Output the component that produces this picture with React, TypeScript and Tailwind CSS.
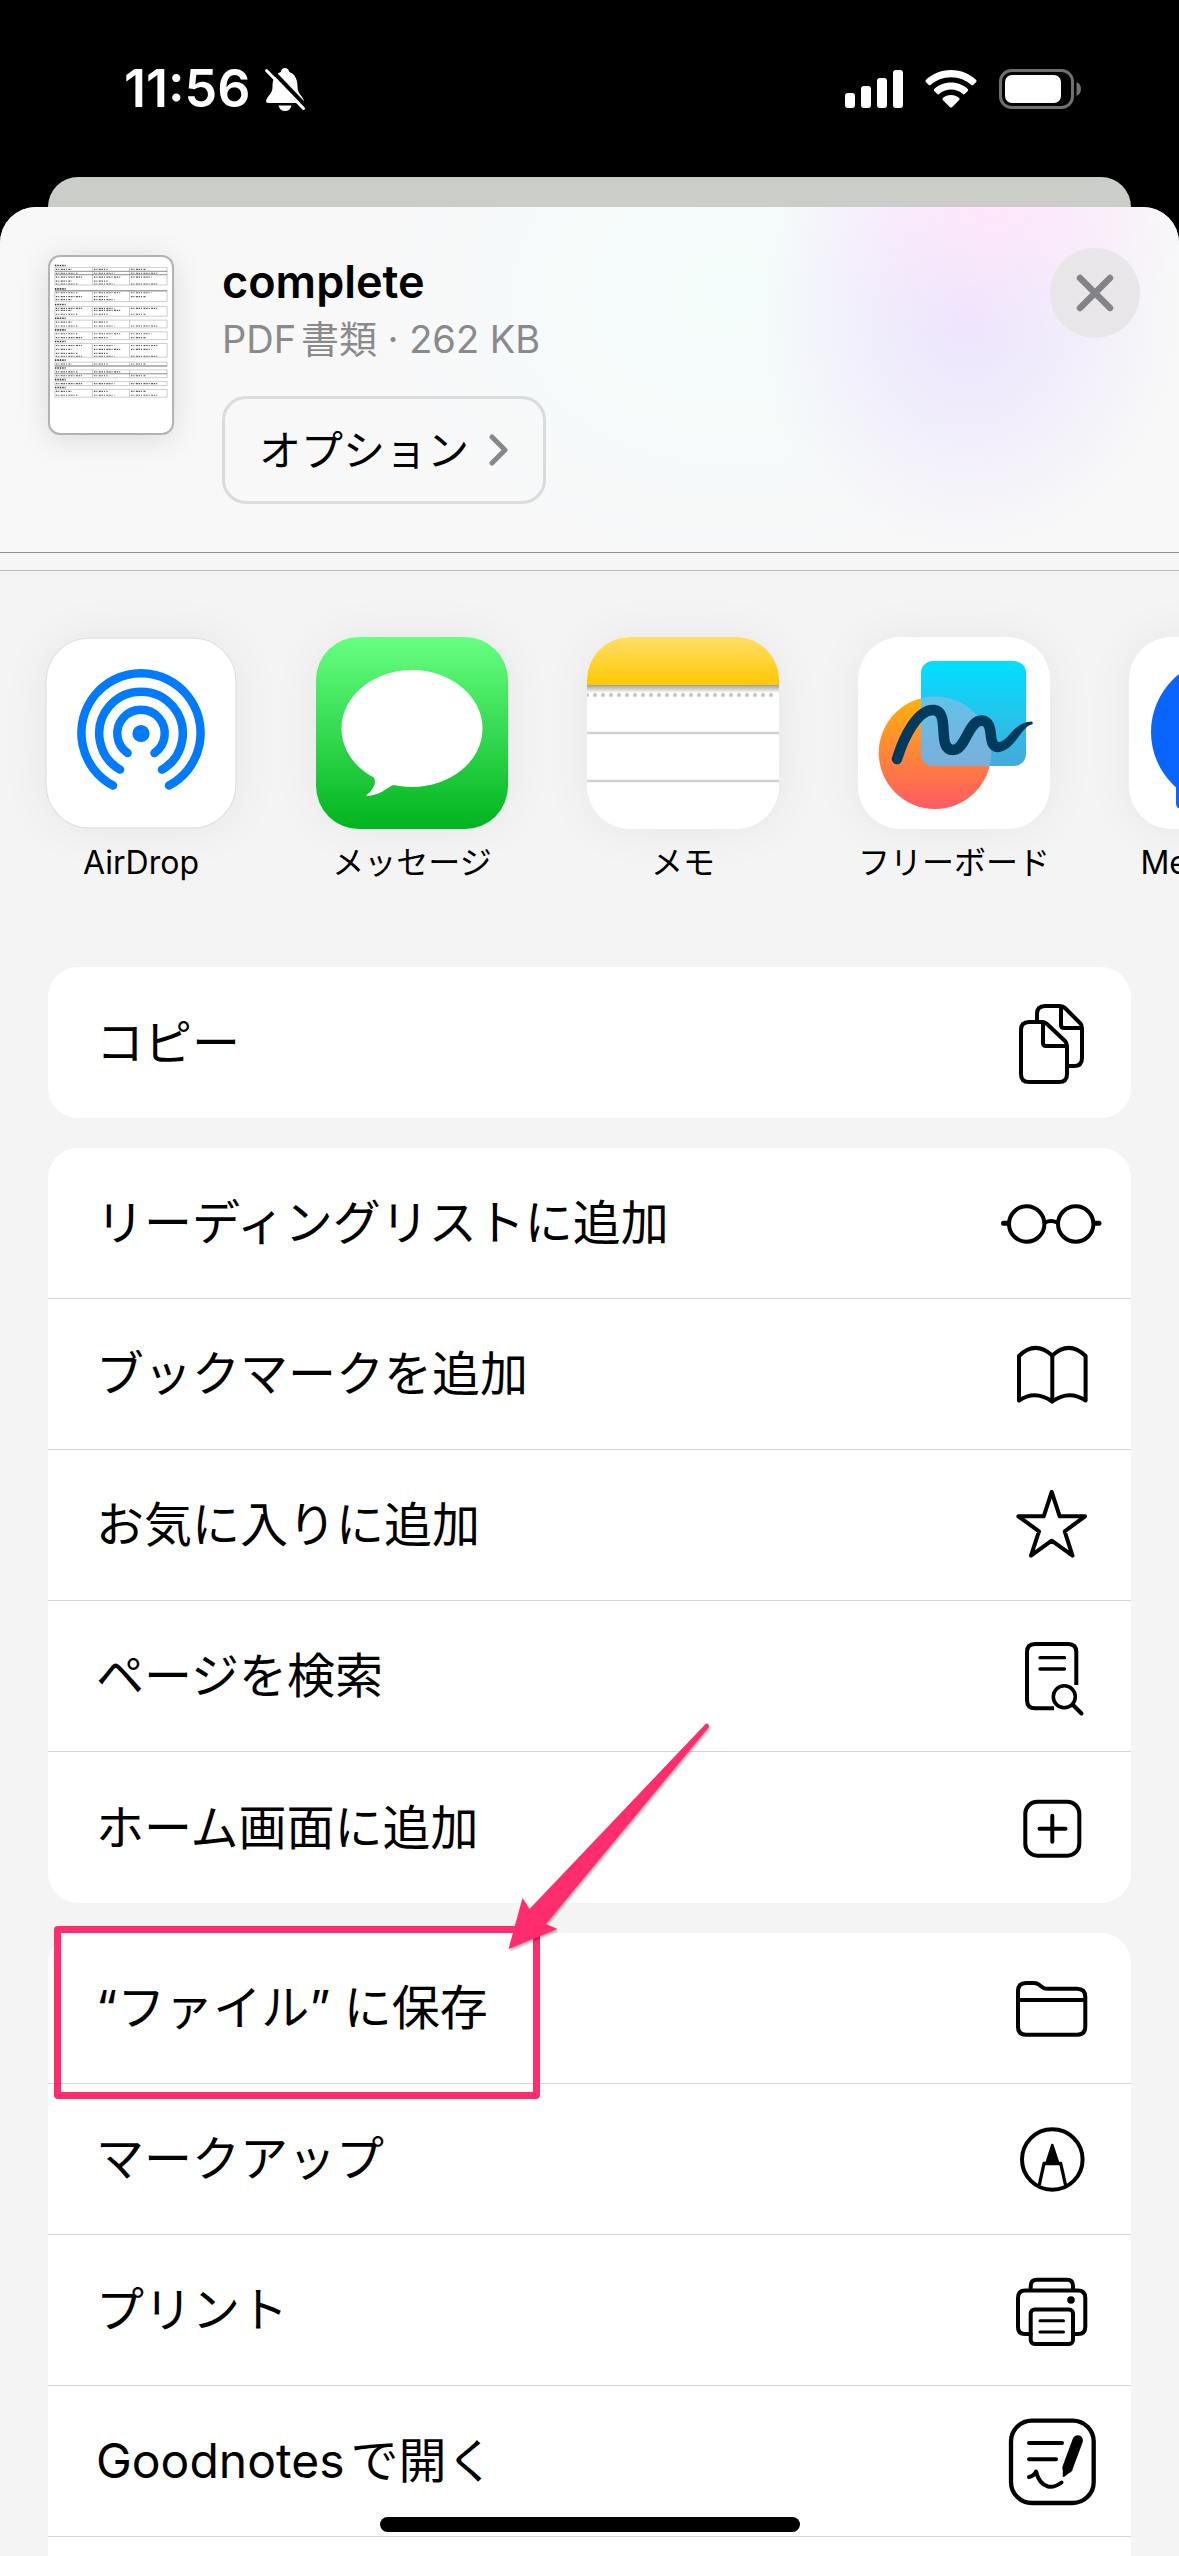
import React from "react";

interface RowItem {
  label: string;
  icon: React.ReactNode;
  highlight?: boolean;
}

interface AppItem {
  label: string;
  icon: React.ReactNode;
}

interface ThumbTable {
  top: number;
  bottom: number;
  rows: number[];
}

const thumbTables: ThumbTable[] = [
  { top: 10, bottom: 28, rows: [12, 16, 20, 24, 27] },
  { top: 34, bottom: 45, rows: [36, 40, 43] },
  { top: 50, bottom: 60, rows: [52, 54, 58] },
  { top: 64, bottom: 72, rows: [66, 70] },
  { top: 76, bottom: 84, rows: [78, 82] },
  { top: 88, bottom: 102, rows: [90, 94, 98, 101] },
  { top: 107, bottom: 111, rows: [109] },
  { top: 115, bottom: 123, rows: [117, 121] },
  { top: 127, bottom: 131, rows: [129] },
  { top: 135, bottom: 143, rows: [137, 141] },
];

const Thumbnail = () => (
  <svg viewBox="0 0 125 179" className="block w-full h-full" aria-hidden="true">
    {thumbTables.map((t, i) => (
      <g key={t.top}>
        <path d={`M5 ${t.top - 2}h11`} stroke="#333" strokeWidth="1.6" strokeDasharray="1.5 1" />
        <path
          d={`M5 ${t.top}H120M5 ${t.top}V${t.bottom}M43.5 ${t.top}V${t.bottom}M81.5 ${t.top}V${t.bottom}M120 ${t.top}V${t.bottom}M5 ${t.bottom}H120`}
          stroke="#999"
          strokeWidth=".5"
          fill="none"
        />
        {t.rows.map((y, j) => (
          <g key={y} stroke="#555" strokeWidth="1.2" strokeDasharray="1.5 1 1 1.5 2 .8">
            <path d={`M6 ${y}h${16 + ((i + j) % 3) * 6}`} />
            <path d={`M45 ${y}h${14 + ((i * 2 + j) % 3) * 7}`} />
            {(i + j) % 4 !== 3 && <path d={`M83 ${y}h${15 + ((i + j * 2) % 3) * 6}`} />}
          </g>
        ))}
      </g>
    ))}
    <path d="M5 14H120M5 17.5H120M5 34H120M5 111H120M5 119H120" stroke="#555" strokeWidth=".7" />
  </svg>
);

const Glyph = ({ children }: { children: React.ReactNode }) => (
  <svg
    viewBox="0 0 110 100"
    className="w-[110px] h-[100px] shrink-0"
    fill="none"
    stroke="#000"
    strokeWidth="4"
    strokeLinecap="round"
    strokeLinejoin="round"
    aria-hidden="true"
  >
    {children}
  </svg>
);

const groups: RowItem[][] = [
  [
    {
      label: "コピー",
      icon: (
        <Glyph>
          <path d="M32 29H46Q48 29 50 31L68 48Q70 50 70 53V81Q70 89 62 89H32Q24 89 24 81V37Q24 29 32 29Z" />
          <path d="M46 30V50Q46 53 49 53H69" />
          <path d="M40 27V21Q40 13 48 13H63Q66 13 68 15L83 30Q85 32 85 35V65Q85 73 77 73H71" strokeLinecap="butt" />
          <path d="M64 14V32Q64 35 67 35H84" />
        </Glyph>
      ),
    },
  ],
  [
    {
      label: "リーディングリストに追加",
      icon: (
        <Glyph>
          <circle cx="29.7" cy="51" r="17.7" />
          <circle cx="78.7" cy="51" r="17.7" />
          <path d="M48 49.5Q54 46.5 60 49.5" />
          <path d="M6.5 50.3H10M98.5 50.3H102" strokeWidth="5" />
        </Glyph>
      ),
    },
    {
      label: "ブックマークを追加",
      icon: (
        <Glyph>
          <path d="M22 32Q38 16 55.3 31.5Q72 16 88.6 32V76.5Q72 65.5 55.3 77.5Q38 65.5 22 76.5Z" />
          <path d="M55.3 31.5V77.5" />
        </Glyph>
      ),
    },
    {
      label: "お気に入りに追加",
      icon: (
        <Glyph>
          <path d="M54.7 17L62.7 41.3H88L67.7 56.3L75.5 80.7L54.7 65.7L34 80.7L42 56.3L21.4 41.3H46.7Z" />
        </Glyph>
      ),
    },
    {
      label: "ページを検索",
      icon: (
        <Glyph>
          <path d="M79.3 59V26Q79.3 18 71.3 18H38Q30 18 30 26V74Q30 82.3 38 82.3H57" strokeLinecap="butt" />
          <path d="M43 31.7H67.5M43 43H67.5" strokeWidth="3.3" />
          <circle cx="67.3" cy="70.7" r="11" strokeWidth="3.6" />
          <path d="M76 79L84.5 87.5" />
        </Glyph>
      ),
    },
    {
      label: "ホーム画面に追加",
      icon: (
        <Glyph>
          <rect x="28.3" y="23.7" width="54" height="54" rx="12" />
          <path d="M42.5 50.7H68.5M55.3 37.7V63.7" />
        </Glyph>
      ),
    },
  ],
  [
    {
      label: "“ファイル” に保存",
      highlight: true,
      icon: (
        <Glyph>
          <path d="M21 69V33Q21 25 29 25H37Q40 25 42.5 27L45 29Q47 30.7 50 30.7H80Q88.3 30.7 88.3 39V69Q88.3 76.7 80 76.7H29Q21 76.7 21 69Z" />
          <path d="M22 42H88" />
        </Glyph>
      ),
    },
    {
      label: "マークアップ",
      icon: (
        <Glyph>
          <circle cx="55.3" cy="50.5" r="30.3" />
          <path d="M42.5 75L47 54.5H63.7L68.3 75" strokeWidth="3.3" />
          <path d="M55.3 36L49.5 54H61.2Z" fill="#000" strokeWidth="2.5" />
        </Glyph>
      ),
    },
    {
      label: "プリント",
      icon: (
        <Glyph>
          <path d="M33.7 29V26Q33.7 19.7 40 19.7H70Q76 19.7 76 26V29" strokeLinecap="butt" />
          <path d="M33.7 74H28Q21 74 21 67V38Q21 30.5 28 30.5H81Q88.3 30.5 88.3 38V67Q88.3 74 81 74H76" />
          <rect x="33.7" y="49.6" width="42.3" height="34.4" rx="4" />
          <path d="M43 60.8H66.5M43 72H66.5" strokeWidth="3" />
          <circle cx="74" cy="40" r="3.8" fill="#000" stroke="none" />
        </Glyph>
      ),
    },
    {
      label: "Goodnotesで開く",
      icon: (
        <Glyph>
          <rect x="14" y="9.6" width="82.7" height="82.4" rx="21" strokeWidth="4.3" />
          <path d="M32 32H65M32 48.3H59" />
          <path d="M32 66Q37 65 39 60.5Q42 73 51 75.5Q57 77 64.5 71.5" />
          <path d="M80.7 29.5L70.5 57" strokeWidth="10.5" />
          <path d="M67 56L66.7 65L74.5 59Z" fill="#000" strokeWidth="2" />
        </Glyph>
      ),
    },
  ],
];

const apps: AppItem[] = [
  {
    label: "AirDrop",
    icon: (
      <svg viewBox="0 0 192 192" className="w-full h-full" fill="none" stroke="#007aff" strokeWidth="8.5" strokeLinecap="round" aria-hidden="true">
        <rect x="1" y="1" width="190" height="190" rx="43" fill="#fff" stroke="#e2e2e2" strokeWidth="1.5" />
        <circle cx="96" cy="96.5" r="8.6" fill="#007aff" stroke="none" />
        <path d="M82.5 116A23.7 23.7 0 1 1 109.5 116" />
        <path d="M75 132.6A41.8 41.8 0 1 1 117 132.6" />
        <path d="M68 148.5A59.6 59.6 0 1 1 124 148.5" />
      </svg>
    ),
  },
  {
    label: "メッセージ",
    icon: (
      <svg viewBox="0 0 192 192" className="w-full h-full" aria-hidden="true">
        <defs>
          <linearGradient id="msg" x1="0" y1="0" x2="0" y2="1">
            <stop offset="0" stopColor="#67ff81" />
            <stop offset="1" stopColor="#01b41f" />
          </linearGradient>
        </defs>
        <rect width="192" height="192" rx="43" fill="url(#msg)" />
        <ellipse cx="96" cy="91.5" rx="70.5" ry="58.5" fill="#fff" />
        <path d="M56 138Q61 143 57.5 150Q55 155 50.5 158Q50 159.5 52 159C62 158 69 153 75 149Q78 147 84 149L90 140Z" fill="#fff" />
      </svg>
    ),
  },
  {
    label: "メモ",
    icon: (
      <svg viewBox="0 0 192 192" className="w-full h-full" aria-hidden="true">
        <defs>
          <linearGradient id="memo" x1="0" y1="0" x2="0" y2="1">
            <stop offset="0" stopColor="#fede68" />
            <stop offset="1" stopColor="#fec800" />
          </linearGradient>
          <linearGradient id="memoShade" x1="0" y1="0" x2="0" y2="1">
            <stop offset="0" stopColor="#a0a0a0" />
            <stop offset="1" stopColor="#fff" />
          </linearGradient>
          <clipPath id="memoClip">
            <rect width="192" height="192" rx="43" />
          </clipPath>
        </defs>
        <g clipPath="url(#memoClip)">
          <rect width="192" height="192" fill="#fff" />
          <rect width="192" height="48" fill="url(#memo)" />
          <rect y="48" width="192" height="8" fill="url(#memoShade)" />
          <path d="M0 58H192" stroke="#c4c4c6" strokeWidth="4" strokeLinecap="round" strokeDasharray="0 8" />
          <path d="M0 96H192M0 144H192" stroke="#d1d1d3" strokeWidth="2.5" />
        </g>
      </svg>
    ),
  },
  {
    label: "フリーボード",
    icon: (
      <svg viewBox="0 0 192 192" className="w-full h-full" aria-hidden="true">
        <defs>
          <linearGradient id="fbCircle" x1="0" y1="0" x2="0" y2="1">
            <stop offset="0" stopColor="#ffb20a" />
            <stop offset="1" stopColor="#ff5a64" />
          </linearGradient>
          <linearGradient id="fbSquare" x1="0" y1="0" x2="0" y2="1">
            <stop offset="0" stopColor="#00e0ff" />
            <stop offset="1" stopColor="#45a9db" />
          </linearGradient>
          <clipPath id="fbClip">
            <rect x="63" y="24" width="105" height="105" rx="12" />
          </clipPath>
        </defs>
        <rect width="192" height="192" rx="43" fill="#fff" />
        <circle cx="77" cy="115.7" r="56.3" fill="url(#fbCircle)" />
        <rect x="63" y="24" width="105" height="105" rx="12" fill="url(#fbSquare)" />
        <circle cx="77" cy="115.7" r="56.3" fill="#bcb6dc" opacity=".45" clipPath="url(#fbClip)" />
        <path
          d="M39 122C46 99 60 72 76 73C93 75 78 113 95 113C108 113 110 83 124 83.5C138 85 128 109.5 140 110"
          fill="none"
          stroke="#003a5d"
          strokeWidth="10.5"
          strokeLinecap="round"
        />
        <path d="M139 105C150 107 154 85 174 84.5Q175.5 86 174 87.5C163 89 157 114 140 115Z" fill="#003a5d" />
      </svg>
    ),
  },
  {
    label: "Messenger",
    icon: (
      <svg viewBox="0 0 192 192" className="w-full h-full" aria-hidden="true">
        <rect width="192" height="192" rx="43" fill="#fff" />
        <circle cx="96" cy="95" r="74" fill="#0866ff" />
        <path d="M47 140V167Q48 173 54 171L76 160Z" fill="#0866ff" />
        <path d="M52 116L78 76Q84 70 92 75L106 86L136 72Q142 71 140 77L116 112Q110 118 102 113L88 102L57 120Q51 121 52 116Z" fill="#fff" />
      </svg>
    ),
  },
];

const StatusBar = () => (
  <div className="flex h-[177px] shrink-0 items-center justify-between bg-black pl-[124px] pr-[98px] text-white">
    <div className="flex items-center gap-3">
      <span className="text-[52px] font-semibold leading-[60px]">11:56</span>
      <svg viewBox="0 0 44 46" className="w-11 h-[46px]" aria-label="消音">
        <path
          d="M22 2C19.5 2 18 4 17.8 6C11.5 8 9.5 14 9.5 21C9.5 28 4 30 3 35Q3 37 5 37H39Q41 37 41 35C40 30 34.5 28 34.5 21C34.5 14 32.5 8 26.2 6C26 4 24.5 2 22 2Z"
          fill="#fff"
        />
        <path d="M15.5 39.5H28.5Q27 45 22 45T15.5 39.5Z" fill="#fff" />
        <path d="M6 1.5L43 40" stroke="#000" strokeWidth="4" />
        <path d="M3.5 4.5L40.5 42.5" stroke="#fff" strokeWidth="3" strokeLinecap="round" />
      </svg>
    </div>
    <div className="flex items-center gap-[22px]">
      <svg viewBox="0 0 58 38" className="w-[58px] h-[38px]" fill="#fff" aria-label="電波">
        <rect x="0" y="23" width="10" height="15" rx="3" />
        <rect x="16" y="16" width="10" height="22" rx="3" />
        <rect x="32" y="8" width="10" height="30" rx="3" />
        <rect x="48" y="0" width="10" height="38" rx="3" />
      </svg>
      <svg viewBox="0 0 52 38" className="w-[52px] h-[38px]" fill="#fff" aria-label="Wi-Fi">
        <path d="M26 0C36 0 45 4 51.2 10Q52 11 51.2 12L48.2 15Q47.3 15.7 46.4 15C41 10 34 7.2 26 7.2S11 10 5.6 15Q4.7 15.7 3.8 15L.8 12Q0 11 .8 10C7 4 16 0 26 0Z" />
        <path d="M26 12.5C32.5 12.5 38.5 15 42.8 19Q43.7 20 42.8 21L39.7 24Q38.8 24.8 37.9 24C34.7 21.2 30.5 19.6 26 19.6S17.3 21.2 14.1 24Q13.2 24.8 12.3 24L9.2 21Q8.3 20 9.2 19C13.5 15 19.5 12.5 26 12.5Z" />
        <path d="M26 25C29 25 32 26.2 34.2 28Q35.1 29 34.2 30L27 37.2Q26 38 25 37.2L17.8 30Q16.9 29 17.8 28C20 26.2 23 25 26 25Z" />
      </svg>
      <svg viewBox="0 0 82 40" className="w-[82px] h-10" aria-label="バッテリー">
        <rect x="1.5" y="1.5" width="72" height="37" rx="11" fill="none" stroke="#707070" strokeWidth="3" />
        <rect x="6" y="6" width="56" height="28" rx="7" fill="#fff" />
        <path d="M77.5 13Q82 15 82 20T77.5 27Z" fill="#707070" />
      </svg>
    </div>
  </div>
);

const SheetHeader = () => (
  <header className="flex items-start gap-12 border-b border-[#8f8f93] bg-[#f8f8f9] bg-[radial-gradient(ellipse_210px_150px_at_84%_0%,#ffe6fb,#ffe6fb66_50%,#ffe6fb00),radial-gradient(ellipse_210px_230px_at_82%_32%,#ece4fd,#ece4fd88_50%,#ece4fd00),radial-gradient(ellipse_360px_280px_at_62%_25%,#f4fdfb,#f4fdfb00)] px-12 py-12">
    <div className="w-[126px] h-[180px] shrink-0 overflow-hidden rounded-xl border-2 border-[#b3b3b6] bg-white shadow-[0_4px_30px_rgba(0,0,0,0.12)]">
      <Thumbnail />
    </div>
    <div className="min-w-0 grow">
      <h1 className="text-[45px] font-semibold leading-[54px]">complete</h1>
      <p className="mt-1.5 text-[38px] leading-[48px] text-[#8a8a8d] [text-autospace:normal]">PDF書類 · 262 KB</p>
      <button
        type="button"
        className="mt-[33px] flex h-[108px] items-center gap-5 rounded-3xl border-[3px] border-[#dadbdc] px-[34px] text-[42px]"
      >
        オプション
        <svg viewBox="0 0 20 34" className="w-5 h-[34px]" fill="none" stroke="#88888b" strokeWidth="5" strokeLinecap="round" strokeLinejoin="round" aria-hidden="true">
          <path d="M3 4L16 17L3 30" />
        </svg>
      </button>
    </div>
    <button
      type="button"
      aria-label="閉じる"
      className="-mt-[7px] -mr-[9px] flex size-[90px] shrink-0 items-center justify-center rounded-full bg-[#e9e6ea]"
    >
      <svg viewBox="0 0 38 38" className="size-[38px]" stroke="#838287" strokeWidth="6.5" strokeLinecap="round" aria-hidden="true">
        <path d="M4 4L34 34M34 4L4 34" />
      </svg>
    </button>
  </header>
);

const Highlight = () => (
  <>
    <span className="pointer-events-none absolute -top-[7px] left-1.5 z-10 h-[173px] w-[486px] rounded-sm border-[7px] border-[#ff2d6d]" />
    <svg
      viewBox="0 0 204 234"
      className="pointer-events-none absolute -top-[213px] left-[458px] z-10 w-[204px] h-[234px] drop-shadow-[1px_2px_1px_rgba(0,0,0,0.3)]"
      aria-hidden="true"
    >
      <path d="M200 3.5Q203 3 203 7L40 204L51.5 209L2.500 229L16.500 178L23.500 189Z" fill="#ff2d6d" />
    </svg>
  </>
);

const App = () => {
  return (
    <div className="relative flex h-screen flex-col overflow-hidden bg-black font-['Inter','Noto_Sans_CJK_JP',sans-serif] text-black">
      <StatusBar />
      {/* page behind the sheet */}
      <div className="mx-12 h-[30px] shrink-0 rounded-t-[30px] bg-[#cbcdc9]" />

      <main className="min-h-0 grow overflow-hidden rounded-t-[36px] bg-[#f4f4f4]">
        <SheetHeader />
        <div className="h-[18px] border-b border-[#bcbcbe] bg-[#f6f6f6]" />

        {/* share targets */}
        <ul className="flex gap-[79px] overflow-hidden pt-[66px] pb-[84px] pl-[45px]">
          {apps.map((app) => (
            <li key={app.label} className="w-48 shrink-0">
              <button type="button" className="flex w-full flex-col items-center">
                <span className="block size-48 rounded-[43px] shadow-[0_0_50px_rgba(0,0,0,0.06)]">{app.icon}</span>
                <span className="mt-3.5 whitespace-nowrap text-[32px] leading-10">{app.label}</span>
              </button>
            </li>
          ))}
        </ul>

        {/* actions */}
        <div className="flex flex-col gap-[30px] px-12">
          {groups.map((group, i) => (
            <ul key={i} className="rounded-[30px] bg-white">
              {group.map((item, j) => (
                <li
                  key={item.label}
                  className={`relative h-[151px] ${
                    j < group.length - 1 || i === groups.length - 1 ? "border-b border-[#d5d5d7]" : ""
                  }`}
                >
                  <button type="button" className="flex h-full w-full items-center justify-between pl-12 pr-6 text-left text-[48px] leading-[60px] [text-autospace:normal]">
                    {item.label}
                    {item.icon}
                  </button>
                  {item.highlight && <Highlight />}
                </li>
              ))}
              {i === groups.length - 1 && <li className="h-[151px]" />}
            </ul>
          ))}
        </div>
      </main>

      {/* home indicator */}
      <div className="absolute bottom-6 left-1/2 z-20 h-[15px] w-[420px] -translate-x-1/2 rounded-full bg-black" />
    </div>
  );
};

export default App;
